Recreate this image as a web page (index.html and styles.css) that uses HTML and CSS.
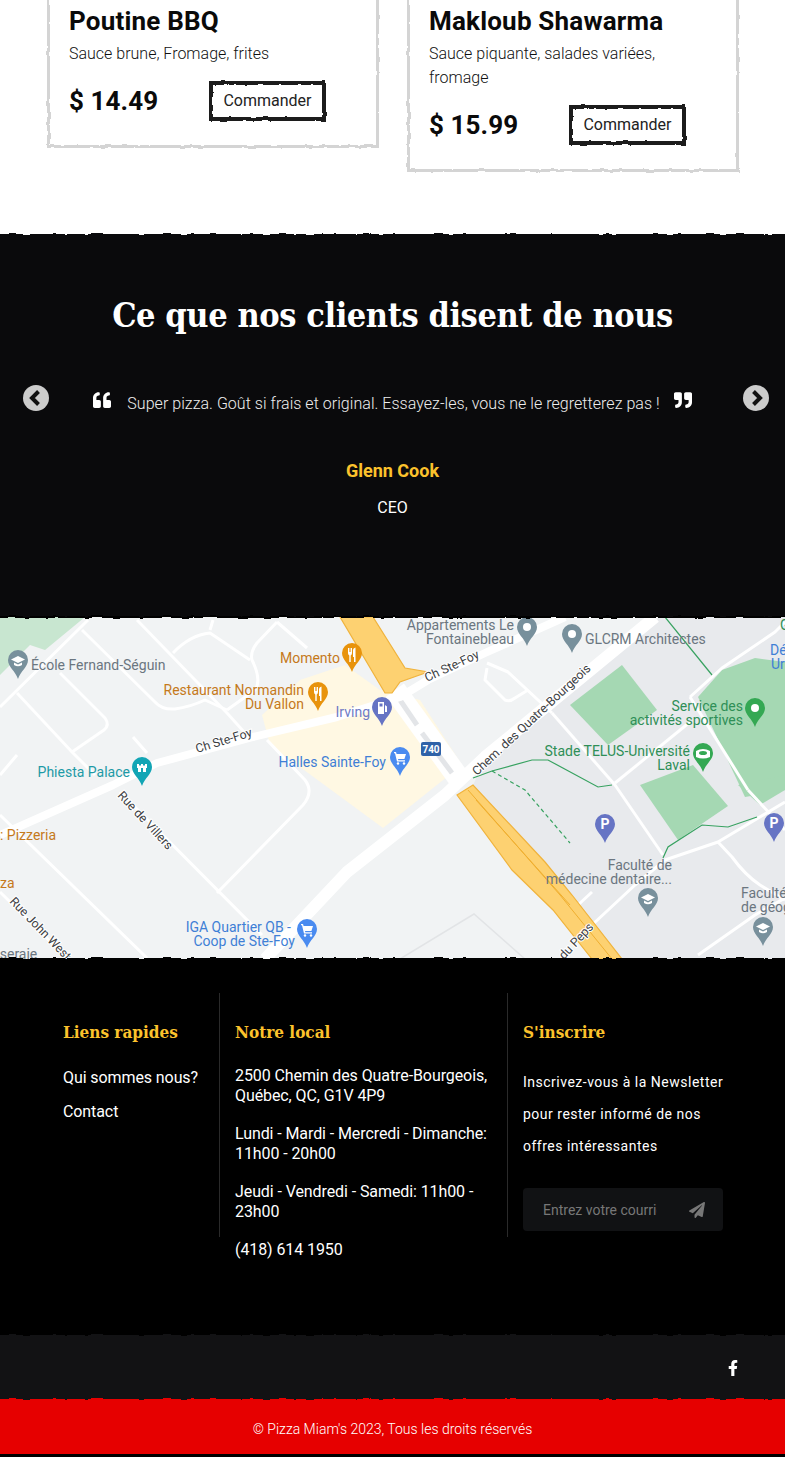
FILE: index.html
```html
<!DOCTYPE html>
<html lang="fr">
<head>
    <meta charset="UTF-8">
    <meta name="viewport" content="width=device-width, initial-scale=1.0">
    <title>Pizza Miam</title>
    <link rel="stylesheet" href="styles.css">
</head>
<body>
    <svg class="defs" width="0" height="0" aria-hidden="true">
        <defs>
            <filter id="rough" x="-2%" y="-200%" width="104%" height="500%" color-interpolation-filters="sRGB">
                <feTurbulence type="fractalNoise" baseFrequency="0.07" numOctaves="3" seed="4"/>
                <feDisplacementMap in="SourceGraphic" scale="4" xChannelSelector="R" yChannelSelector="G"/>
            </filter>
            <filter id="rough-box" x="-3%" y="-8%" width="106%" height="116%" color-interpolation-filters="sRGB">
                <feTurbulence type="fractalNoise" baseFrequency="0.1" numOctaves="3" seed="7"/>
                <feDisplacementMap in="SourceGraphic" scale="3" xChannelSelector="R" yChannelSelector="G"/>
            </filter>
            <path id="pin" d="M10 0a10 10 0 0 1 10 10c0 7-7.500 11-10 19C7.500 21 0 17 0 10A10 10 0 0 1 10 0z"/>
            <g id="cap"><path d="M10 6l7 3.500-7 3.500-7-3.500z" fill="#fff"/><path d="M6 12.500v2.500q4 2.500 8 0v-2.500l-4 2z" fill="#fff"/></g>
            <g id="fork"><path d="M6 5v5q0 2 1.300 2.400V19h1.400v-6.600Q10 12 10 10V5H9v4H8.400V5H7.600v4H7V5zM12 19v-5h-1V7q0-2 2.500-2.500V19z" fill="#fff"/></g>
            <g id="cart"><path d="M4 5h2l.600 2H16l-1.600 5H8l.300 1.200H15v1.300H7L5 6.300H4z" fill="#fff"/><circle cx="8" cy="16.500" r="1.200" fill="#fff"/><circle cx="14" cy="16.500" r="1.200" fill="#fff"/></g>
            <g id="dot"><circle cx="10" cy="10" r="4" fill="#fff"/></g>
            <g id="pump"><path d="M6 5h6v12H6zM7.500 6.500v3h3v-3zM13 8l2 1.500V15h-2z" fill="#fff"/></g>
            <g id="castle"><path d="M5 7h2v1.500h2V7h2v1.500h2V7h2v4h-1v4H6v-4H5z" fill="#fff"/><rect x="9" y="11" width="2" height="4" fill="#12a5b5"/></g>
            <g id="stadium"><path d="M3 8q7-4 14 0v6q-7 3-14 0z" fill="#fff"/><ellipse cx="10" cy="10" rx="4" ry="2" fill="#34a853"/></g>
        </defs>
    </svg>

    <section class="dishes">
        <article class="dish">
            <h3 class="dish-name">Poutine BBQ</h3>
            <p class="dish-desc">Sauce brune, Fromage, frites</p>
            <div class="dish-row">
                <span class="dish-price">$ 14.49</span>
                <a class="order-btn">Commander</a>
            </div>
        </article>
        <article class="dish">
            <h3 class="dish-name">Makloub Shawarma</h3>
            <p class="dish-desc">Sauce piquante, salades variées, fromage</p>
            <div class="dish-row">
                <span class="dish-price">$ 15.99</span>
                <a class="order-btn">Commander</a>
            </div>
        </article>
    </section>

    <section class="reviews torn">
        <h2 class="reviews-title">Ce que nos clients disent de nous</h2>
        <div class="slider">
            <svg class="arrow" viewBox="0 0 26 26"><circle cx="13" cy="13" r="13" fill="#ccc"/><path d="M15.500 6.500L9 13l6.500 6.500" fill="none" stroke="#111" stroke-width="4"/></svg>
            <div class="quote">
                <svg class="quote-mark" viewBox="0 0 512 512"><path d="M464 256h-80v-64c0-35.300 28.700-64 64-64h8c13.300 0 24-10.700 24-24V56c0-13.300-10.700-24-24-24h-8c-88.400 0-160 71.600-160 160v240c0 26.500 21.500 48 48 48h128c26.500 0 48-21.500 48-48V304c0-26.500-21.500-48-48-48zm-288 0H96v-64c0-35.300 28.700-64 64-64h8c13.300 0 24-10.700 24-24V56c0-13.300-10.700-24-24-24h-8C71.600 32 0 103.600 0 192v240c0 26.500 21.500 48 48 48h128c26.500 0 48-21.500 48-48V304c0-26.500-21.500-48-48-48z"/></svg>
                <p class="quote-text">Super pizza. Goût si frais et original. Essayez-les, vous ne le regretterez pas !</p>
                <svg class="quote-mark quote-end" viewBox="0 0 512 512"><path d="M464 32H336c-26.500 0-48 21.500-48 48v128c0 26.500 21.500 48 48 48h80v64c0 35.300-28.700 64-64 64h-8c-13.300 0-24 10.700-24 24v48c0 13.300 10.700 24 24 24h8c88.400 0 160-71.600 160-160V80c0-26.500-21.500-48-48-48zm-288 0H48C21.500 32 0 53.500 0 80v128c0 26.500 21.500 48 48 48h80v64c0 35.300-28.700 64-64 64h-8c-13.300 0-24 10.700-24 24v48c0 13.300 10.700 24 24 24h8c88.400 0 160-71.600 160-160V80c0-26.500-21.500-48-48-48z"/></svg>
            </div>
            <svg class="arrow" viewBox="0 0 26 26"><circle cx="13" cy="13" r="13" fill="#ccc"/><path d="M10.500 6.500L17 13l-6.500 6.500" fill="none" stroke="#111" stroke-width="4"/></svg>
        </div>
        <p class="author">Glenn Cook</p>
        <p class="author-job">CEO</p>
    </section>

    <section class="map torn">
        <svg class="map-img" viewBox="0 617 785 342" width="785" height="342">
            <rect class="m-land" x="0" y="617" width="785" height="342"/>
            <polygon class="m-campus" points="660,617 785,617 785,959 622,959 473,785 485,760"/>
            <polygon class="m-mall" points="262,715 300,680 345,665 380,690 420,700 462,765 383,828 270,745"/>
            <polygon class="m-park" points="0,617 85,617 45,650 30,645 0,675"/>
            <polygon class="m-field" points="722,670 755,658 785,662 785,790 745,797 698,697"/>
            <polygon class="m-field" points="570,705 622,665 657,710 608,745"/>
            <polygon class="m-field" points="640,785 693,765 728,806 678,840"/>
            <polygon class="m-field" points="738,785 785,775 785,790 760,805"/>

            <g class="m-street">
                <path d="M88 620L0 707"/>
                <path d="M82 630L155 702Q162 710 175 709Q190 707 205 700L227 710"/>
                <path d="M137 620L227 713L245 733"/>
                <path d="M60 673L105 718Q110 725 104 730L72 752"/>
                <path d="M17 693L72 752L95 775"/>
                <path d="M133 737L147 753"/>
                <path d="M0 775L17 755"/>
                <path d="M173 653Q190 635 210 633L250 660"/>
                <path d="M213 620L210 630"/>
                <path d="M277 622L257 643Q250 652 252 660Q262 680 255 690L227 710"/>
                <path d="M277 622L307 648"/>
                <path d="M0 815L147 958"/>
                <path d="M120 792L262 935"/>
                <path d="M217 893L303 805Q314 792 305 780L267 740"/>
                <path d="M0 892L67 958"/>
                <path d="M552 713L615 785L663 855"/>
                <path d="M615 783L690 722"/>
                <path d="M592 925L635 885L665 860L718 842L785 802"/>
                <path d="M718 842L732 857Q745 875 760 885L785 900"/>
                <path d="M698 955L755 915L785 898"/>
                <path d="M578 905L592 892"/>
                <path d="M748 790L785 830"/>
                <path d="M690 697L748 790"/>
                <path d="M690 697L722 668L775 632L785 622"/>
                <path d="M487 663L508 672L552 713"/>
                <path d="M487 668L485 680L505 700Q510 702 515 698L528 690"/>
            </g>
            <path class="m-faint" d="M400 959L474 914L525 959"/>
            <path class="m-ramp" d="M395 690L460 780"/>
            <path class="m-divider" d="M400 700L417 725M422 733L452 773"/>

            <polygon class="m-highway" points="340,617 373,617 405,668 428,672 400,682 392,693 385,693"/>
            <polygon class="m-highway" points="457,795 473,785 545,862 572,895 622,959 592,959 553,910 512,870"/>
            <path class="m-highway-line" d="M468 790L560 895L612 959M476 800L570 905"/>
            <path class="m-main" d="M0 835L113 785L157 763L253 737L337 717L400 697L428 680L485 653L565 617"/>
            <path class="m-main m-qb" d="M265 959L347 872L445 795L485 757L655 617"/>

            <path class="m-trail" d="M473 778L492 771L532 760L548 760L598 787L612 785"/>
            <path class="m-trail" d="M665 617L712 675"/>
            <path class="m-trail" d="M663 858L668 847L702 825L728 827L757 817"/>
            <path class="m-trail m-dash" d="M492 771L525 790L570 843"/>

            <rect class="m-shield" x="421" y="742" width="20" height="14" rx="2"/>
            <text class="m-shield-text" x="431" y="753" text-anchor="middle">740</text>

            <text class="m-road" transform="translate(197,753) rotate(-17)">Ch Ste-Foy</text>
            <text class="m-road" transform="translate(427,682) rotate(-25)">Ch Ste-Foy</text>
            <text class="m-road" transform="translate(477,776) rotate(-43)">Chem. des Quatre-Bourgeois</text>
            <text class="m-road" transform="translate(117,796) rotate(47)">Rue de Villers</text>
            <text class="m-road" transform="translate(9,902) rotate(46)">Rue John West</text>
            <text class="m-road" transform="translate(564,960) rotate(-47)">du Peps</text>

            <text class="m-gray" x="31" y="670">École Fernand-Séguin</text>
            <text class="m-orange" x="340" y="663" text-anchor="end">Momento</text>
            <text class="m-orange" x="304" y="695" text-anchor="end">Restaurant Normandin</text>
            <text class="m-orange" x="304" y="709" text-anchor="end">Du Vallon</text>
            <text class="m-purple" x="370" y="717" text-anchor="end">Irving</text>
            <text class="m-blue" x="386" y="767" text-anchor="end">Halles Sainte-Foy</text>
            <text class="m-teal" x="130" y="777" text-anchor="end">Phiesta Palace</text>
            <text class="m-gray" x="514" y="630" text-anchor="end">Appartements Le</text>
            <text class="m-gray" x="514" y="644" text-anchor="end">Fontainebleau</text>
            <text class="m-gray" x="585" y="644">GLCRM Architectes</text>
            <text class="m-green" x="743" y="711" text-anchor="end">Service des</text>
            <text class="m-green" x="743" y="725" text-anchor="end">activités sportives</text>
            <text class="m-green" x="690" y="756" text-anchor="end">Stade TELUS-Université</text>
            <text class="m-green" x="690" y="770" text-anchor="end">Laval</text>
            <text class="m-gray" x="672" y="870" text-anchor="end">Faculté de</text>
            <text class="m-gray" x="672" y="884" text-anchor="end">médecine dentaire...</text>
            <text class="m-gray" x="741" y="898">Faculté</text>
            <text class="m-gray" x="741" y="912">de géog</text>
            <text class="m-blue" x="291" y="932" text-anchor="end">IGA Quartier QB -</text>
            <text class="m-blue" x="295" y="946" text-anchor="end">Coop de Ste-Foy</text>
            <text class="m-orange" x="0" y="840">: Pizzeria</text>
            <text class="m-orange" x="0" y="888">za</text>
            <text class="m-gray" x="-8" y="959">nseraie</text>
            <text class="m-blue" x="770" y="655">Dé</text>
            <text class="m-blue" x="771" y="669">Ur</text>
            <text class="m-green" x="780" y="630">G</text>

            <use href="#pin" class="p-gray" x="8" y="650"/><use href="#cap" x="8" y="650"/>
            <use href="#pin" class="p-orange" x="342" y="643"/><use href="#fork" x="342" y="643"/>
            <use href="#pin" class="p-orange" x="308" y="682"/><use href="#fork" x="308" y="682"/>
            <use href="#pin" class="p-purple" x="372" y="697"/><use href="#pump" x="372" y="697"/>
            <use href="#pin" class="p-blue" x="390" y="747"/><use href="#cart" x="390" y="747"/>
            <use href="#pin" class="p-teal" x="132" y="757"/><use href="#castle" x="132" y="757"/>
            <use href="#pin" class="p-gray" x="517" y="617"/><use href="#dot" x="517" y="617"/>
            <use href="#pin" class="p-gray" x="562" y="624"/><use href="#dot" x="562" y="624"/>
            <use href="#pin" class="p-green" x="745" y="698"/><use href="#dot" x="745" y="698"/>
            <use href="#pin" class="p-green" x="693" y="743"/><use href="#stadium" x="693" y="743"/>
            <use href="#pin" class="p-purple" x="595" y="814"/><text class="m-p" x="605" y="829" text-anchor="middle">P</text>
            <use href="#pin" class="p-purple" x="764" y="813"/><text class="m-p" x="774" y="828" text-anchor="middle">P</text>
            <use href="#pin" class="p-gray" x="638" y="888"/><use href="#cap" x="638" y="888"/>
            <use href="#pin" class="p-gray" x="753" y="917"/><use href="#cap" x="753" y="917"/>
            <use href="#pin" class="p-blue" x="297" y="919"/><use href="#cart" x="297" y="919"/>
        </svg>
    </section>

    <footer class="footer torn">
        <div class="footer-cols">
            <div class="footer-col col-links">
                <h4 class="footer-title">Liens rapides</h4>
                <ul class="footer-links">
                    <li>Qui sommes nous?</li>
                    <li>Contact</li>
                </ul>
            </div>
            <div class="footer-col col-local">
                <h4 class="footer-title">Notre local</h4>
                <p>2500 Chemin des Quatre-Bourgeois, Québec, QC, G1V 4P9</p>
                <p>Lundi - Mardi - Mercredi - Dimanche: 11h00 - 20h00</p>
                <p>Jeudi - Vendredi - Samedi: 11h00 - 23h00</p>
                <p>(418) 614 1950</p>
            </div>
            <div class="footer-col col-news">
                <h4 class="footer-title">S'inscrire</h4>
                <p class="news-text">Inscrivez-vous à la Newsletter pour rester informé de nos offres intéressantes</p>
                <form class="news-form">
                    <input class="news-input" type="text" placeholder="Entrez votre courriel">
                    <svg class="news-send" viewBox="0 0 512 512"><path d="M476 3.200L12.500 270.600c-18.100 10.400-15.800 35.600 2.200 43.200L121 358.400l287.300-253.200c5.500-4.900 13.300 2.600 8.600 8.300L176 407v80.500c0 23.600 28.500 32.900 42.500 15.800L282 426l124.600 52.200c14.200 6 30.400-2.900 33-18.200l72-432C515 7.800 493.300-6.800 476 3.200z"/></svg>
                </form>
            </div>
        </div>
    </footer>

    <div class="social torn">
        <svg class="social-icon" viewBox="0 0 320 512"><path d="M279.140 288l14.220-92.660h-88.910v-60.130c0-25.350 12.420-50.060 52.240-50.060h40.420V6.260S260.430 0 225.360 0c-73.220 0-121.080 44.380-121.080 124.720v70.620H22.890V288h81.390v224h100.170V288z"/></svg>
    </div>
    <div class="copyright torn">© Pizza Miam's 2023, Tous les droits réservés</div>
</body>
</html>
```

FILE: styles.css
```css
* { box-sizing: border-box; }
html, body { height: 1457px; overflow: hidden; }
body { margin: 0; background: #000; color: #fff; font-family: Roboto, Arial, sans-serif; }
h2, h3, h4, p, ul { margin: 0; padding: 0; }
ul { list-style: none; }
.defs { position: absolute; }

/* dishes */
.dishes { background: #fff; color: #111; height: 235px; display: flex; align-items: flex-start; gap: 28px; padding-left: 47px; }
.dish { position: relative; width: 332px; margin-top: -20px; padding: 26px 22px 27px; }
.dish::after { content: ""; position: absolute; inset: 0; border: 3px solid #d4d4d4; filter: url(#rough-box); }
.dish-name { font-size: 26px; line-height: 30px; font-weight: 700; letter-spacing: .2px; color: #0a0a0a; }
.dish-desc { font-size: 16px; line-height: 24px; font-weight: 300; margin-top: 6px; }
.dish-row { display: flex; align-items: center; margin-top: 15px; }
.dish-price { width: 140px; font-size: 26px; line-height: 38px; font-weight: 700; letter-spacing: .1px; color: #0a0a0a; }
.order-btn { position: relative; width: 117px; height: 40px; line-height: 39px; text-align: center; font-size: 16px; color: #222; }
.order-btn::after { content: ""; position: absolute; inset: 0; border: 4px solid #1c1c1c; filter: url(#rough-box); }

/* torn edge on top of the dark bands */
.torn { position: relative; }
.torn::before { content: ""; position: absolute; left: -10px; right: -10px; top: -1px; height: 4px; background: inherit; filter: url(#rough); }

/* reviews */
.reviews { background: #0a0a0c; height: 382px; padding-top: 60px; text-align: center; }
.reviews-title { font-family: "DejaVu Serif Condensed", "DejaVu Serif", serif; font-size: 34px; line-height: 40px; font-weight: 700; letter-spacing: -.42px; }
.slider { display: flex; justify-content: space-between; align-items: flex-start; margin-top: 50px; padding: 0 16px 0 23px; }
.arrow { width: 26px; height: 26px; }
.quote { display: flex; align-items: flex-start; gap: 16px; margin-right: 7px; }
.quote-mark { width: 18px; height: 18px; fill: #fff; margin-top: 6px; }
.quote-end { margin-left: -2px; }
.quote-text { font-size: 16px; line-height: 24px; font-weight: 300; letter-spacing: .04px; margin-top: 7px; color: #eee; white-space: nowrap; }
.author { font-size: 18px; line-height: 24px; font-weight: 700; color: #fcc22c; margin-top: 43px; }
.author-job { font-size: 16px; line-height: 24px; margin-top: 13px; }

/* map */
.map { background: #000; height: 342px; }
.map::before { z-index: 1; height: 2px; }
.map-img { display: block; }
.m-land { fill: #f1f3f4; }
.m-campus { fill: #e8eaed; }
.m-mall { fill: #fff8e3; }
.m-park { fill: #c8e6d0; }
.m-field { fill: #a5d8b3; }
.m-street path { fill: none; stroke: #fff; stroke-width: 3; stroke-linejoin: round; }
.m-faint { fill: none; stroke: #e2e4e6; stroke-width: 1.500; }
.m-ramp { fill: none; stroke: #fff; stroke-width: 22; }
.m-divider { fill: none; stroke: #e3e5e8; stroke-width: 5; }
.m-highway { fill: #fdd171; stroke: #f0b33c; stroke-width: 1.200; }
.m-highway-line { fill: none; stroke: #efae2f; stroke-width: 1; }
.m-main { fill: none; stroke: #fff; stroke-width: 8; stroke-linejoin: round; }
.m-qb { stroke-width: 12; }
.m-trail { fill: none; stroke: #37a260; stroke-width: 1.200; }
.m-dash { stroke-dasharray: 4 3; }
.m-shield { fill: #2f62a8; }
.map-img text { font-family: Roboto, Arial, sans-serif; font-size: 14px; }
.map-img .m-road { font-size: 12.300px; fill: #3c4043; paint-order: stroke; stroke: #fff; stroke-width: 2px; }
.map-img .m-shield-text { font-size: 10px; font-weight: 700; fill: #fff; }
.map-img .m-p { font-size: 14px; font-weight: 700; fill: #fff; }
.m-gray { fill: #6b7680; }
.m-orange { fill: #c5791b; }
.m-purple { fill: #6f7bc6; }
.m-blue { fill: #3f7fd6; }
.m-teal { fill: #1e9aa6; }
.m-green { fill: #2f8f57; }
.p-gray { fill: #78909c; }
.p-orange { fill: #e8930c; }
.p-purple { fill: #6674c4; }
.p-blue { fill: #4a8bf0; }
.p-teal { fill: #12a5b5; }
.p-green { fill: #34a853; }

/* footer */
.footer { background: #000; height: 377px; padding: 34px 0 0 48px; }
.footer::before { z-index: 1; }
.footer-cols { display: flex; height: 244px; }
.footer-col { padding: 27px 15px 0; font-size: 16px; line-height: 20px; letter-spacing: -.09px; }
.col-links { width: 172px; border-right: 1px solid #2a2a2a; }
.col-local { width: 288px; border-right: 1px solid #2a2a2a; }
.col-news { width: 230px; }
.footer-title { font-family: "DejaVu Serif Condensed", "DejaVu Serif", serif; font-size: 17px; line-height: 24px; font-weight: 700; letter-spacing: 0; color: #fcc22c; }
.footer-links { margin-top: 24px; }
.footer-links li { margin-bottom: 14px; }
.col-local .footer-title { margin-bottom: 22px; }
.col-local p { margin-bottom: 18px; }
.news-text { font-size: 14px; line-height: 32px; letter-spacing: .5px; margin-top: 22px; width: 210px; }
.news-form { display: flex; align-items: center; justify-content: space-between; width: 200px; height: 43px; margin-top: 26px; padding: 0 18px 0 20px; background: #111214; border-radius: 4px; }
.news-input { width: 114px; padding: 0; border: 0; background: transparent; color: #777; font: 14px Roboto, Arial, sans-serif; outline: none; }
.news-input::placeholder { color: #777; }
.news-send { width: 16px; height: 16px; fill: #777; }

/* bottom bars */
.social { background: #121214; height: 64px; display: flex; justify-content: flex-end; align-items: center; padding-right: 47px; }
.social-icon { width: 10px; height: 16px; fill: #fff; }
.copyright { background: #e60000; height: 54px; line-height: 58px; text-align: center; font-size: 14px; font-weight: 300; }
```
